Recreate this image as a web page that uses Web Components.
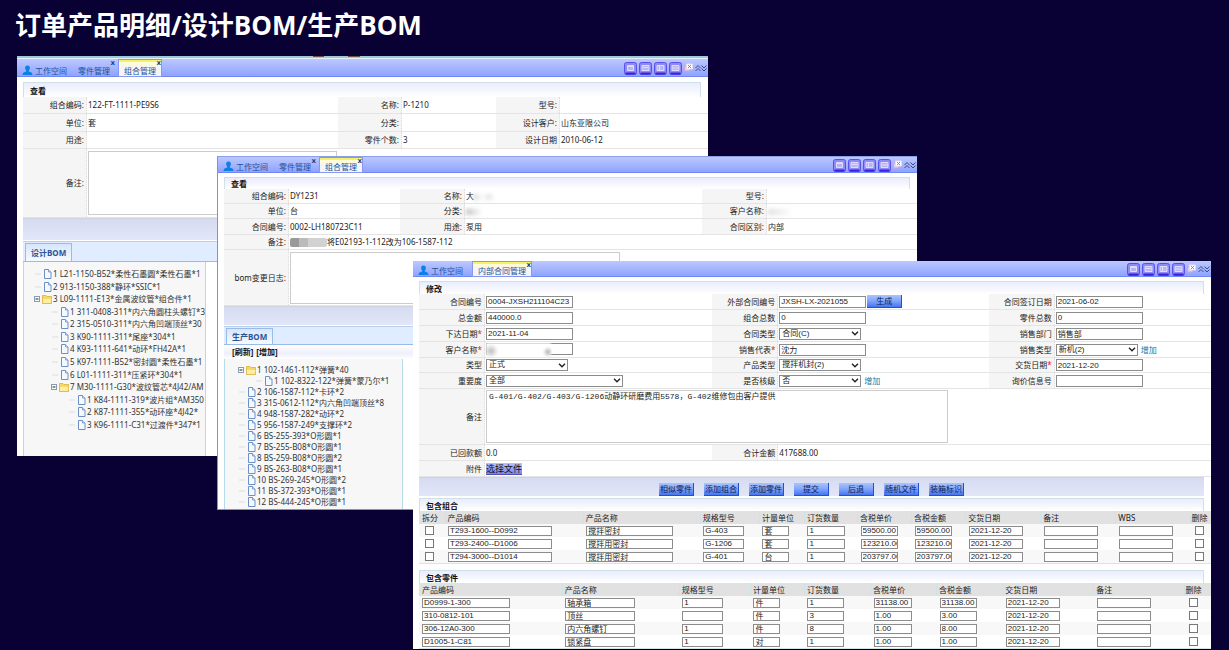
<!DOCTYPE html>
<html lang="zh-CN">
<head>
<meta charset="utf-8">
<title>订单产品明细/设计BOM/生产BOM</title>
<style>
  body { margin: 0; background: #090033; font: 8px/12px "Noto Sans", "Noto Sans CJK SC", sans-serif; color: #222; }
</style>
</head>
<body>
<bom-desktop></bom-desktop>

<template id="t-desktop">
  <style>
    :host { display: block; position: relative; min-height: 100vh; overflow: hidden; }
    h1 { margin: 0; padding: 5px 15px; font: bold 26px/40px "Open Sans", "Noto Sans CJK SC", sans-serif; color: #fff; }
    app-window { position: absolute; }
    .w1 { left: 17px; right: 521px; top: 56px; --row: 17px; --cols: 315fr 158fr 212fr; --label: 64px; --head: 15px; --bar: 18px; --top: 5px; }
    .w2 { left: 217px; right: 312px; top: 156px; --row: 15px; --cols: 176fr 302fr 215fr; --label: 65px; --head: 12px; --bar: 16px; border: 1px solid #6f9ad6; border-right: 0; border-top-color: #8d9fe8; }
    .w3 { left: 413px; right: 18px; top: 261px; --row: 16px; --cols: 293fr 276fr 222fr; --label: 66px; --head: 13px; --bar: 16px; border-bottom: 1px solid #000; }
    .strip { height: 3px; background: linear-gradient(90deg, transparent 296px, #6b5145 296px 307px, transparent 307px 331px, #6b5145 331px 343px, transparent 343px) 0 0 / 100% 1px no-repeat, linear-gradient(#9fc8dc 2px, #e4f2f8 2px); }
    .band { height: 19px; margin-right: 7px; border-top: 1px solid #cfd3de; background: linear-gradient(#d6dbf1, #e2e6f8); box-sizing: border-box; }
    .w1 .band, .w2 .band { margin-right: 0; }
    .w1 .band { height: 22px; }
    .w3 .band { display: flex; justify-content: center; align-items: flex-end; gap: 10px; }
    .pixel { display: inline-flex; vertical-align: middle; height: 9px; width: 37px; background: linear-gradient(90deg, #999 9px, #bbb 9px 18px, #d2d2d2 18px); border-radius: 2px; }
    .smudge { display: inline-block; vertical-align: middle; width: 18px; height: 6px; filter: blur(2px); background: linear-gradient(90deg, #ccc, #fff 40%, #ddd); }
    .long { width: 120px; background: linear-gradient(90deg, #ddd, #fff 20%); }
    .cloud { width: 80px; background: linear-gradient(90deg, #bbb, #fff 20%); }
    .gap { height: 6px; }
  </style>
  <h1>订单产品明细/设计BOM/生产BOM</h1>

  <app-window class="w1" tabs="零件管理,组合管理">
    <div class="strip" slot="top"></div>
    <panel-head>查看</panel-head>
    <form-row>
      <form-field label="组合编码:">122-FT-1111-PE9S6</form-field>
      <form-field label="名称:">P-1210</form-field>
      <form-field label="型号:"></form-field>
    </form-row>
    <form-row style="--row:18px">
      <form-field label="单位:">套</form-field>
      <form-field label="分类:"></form-field>
      <form-field label="设计客户:">山东亚限公司</form-field>
    </form-row>
    <form-row>
      <form-field label="用途:"></form-field>
      <form-field label="零件个数:">3</form-field>
      <form-field label="设计日期">2010-06-12</form-field>
    </form-row>
    <form-row style="--cols:1fr;--row:69px"><form-field label="备注:" kind="textarea" size="249" lines="64"></form-field></form-row>
    <div class="band"></div>
    <bom-tree tab="设计BOM" style="--tree:163px;--pad:6px;--end:25px;--strip:21px;--pane:183px;--ind:8px"
      items="0|L|1 L21-1150-B52*柔性石墨圆*柔性石墨*1;0|L|2 913-1150-388*静环*SSIC*1;0|F|3 L09-1111-E13*金属波纹管*组合件*1;1|L|1 311-0408-311*内六角圆柱头螺钉*3;1|L|2 315-0510-311*内六角凹端顶丝*30;1|L|3 K90-1111-311*尾座*304*1;1|L|4 K93-1111-641*动环*FH42A*1;1|L|5 K97-1111-B52*密封圆*柔性石墨*1;1|L|6 L01-1111-311*压紧环*304*1;1|F|7 M30-1111-G30*波纹管芯*4J42/AM;2|L|1 K84-1111-319*波片组*AM350;2|L|2 K87-1111-355*动环座*4J42*;2|L|3 K96-1111-C31*过渡件*347*1"></bom-tree>
  </app-window>

  <app-window class="w2" tabs="零件管理,组合管理">
    <panel-head>查看</panel-head>
    <form-row>
      <form-field label="组合编码:">DY1231</form-field>
      <form-field label="名称:">大<span class="smudge"></span></form-field>
      <form-field label="型号:"></form-field>
    </form-row>
    <form-row>
      <form-field label="单位:">台</form-field>
      <form-field label="分类:"><span class="smudge cloud"></span></form-field>
      <form-field label="客户名称:"><span class="smudge long"></span></form-field>
    </form-row>
    <form-row style="--row:16px">
      <form-field label="合同编号:">0002-LH180723C11</form-field>
      <form-field label="用途:">泵用</form-field>
      <form-field label="合同区别:">内部</form-field>
    </form-row>
    <form-row style="--cols:1fr"><form-field label="备注:"><span class="pixel"></span>将E02193-1-112改为106-1587-112</form-field></form-row>
    <form-row style="--cols:1fr;--row:56px"><form-field label="bom变更日志:" kind="textarea" size="330" lines="52"></form-field></form-row>
    <div class="band"></div>
    <bom-tree tab="生产BOM" tools style="--tree:143px;--pad:5px;--end:2px;--strip:19px;--pane:179px;--ind:11px"
      items="0|F|1 102-1461-112*弹簧*40;1|L|1 102-8322-122*弹簧*蒙乃尔*1;0|L|2 106-1587-112*卡环*2;0|L|3 315-0612-112*内六角凹端顶丝*8;0|L|4 948-1587-282*动环*2;0|L|5 956-1587-249*支撑环*2;0|L|6 BS-255-393*O形圆*1;0|L|7 BS-255-B08*O形圆*1;0|L|8 BS-259-B08*O形圆*2;0|L|9 BS-263-B08*O形圆*1;0|L|10 BS-269-245*O形圆*2;0|L|11 BS-372-393*O形圆*1;0|L|12 BS-444-245*O形圆*1"></bom-tree>
  </app-window>

  <app-window class="w3" tabs="内部合同管理">
    <panel-head>修改</panel-head>
    <form-row>
      <form-field label="合同编号" kind="input" value="0004-JXSH211104C23"></form-field>
      <form-field label="外部合同编号" kind="input" value="JXSH-LX-2021055"><blue-button slot="after">生成</blue-button></form-field>
      <form-field label="合同签订日期" kind="input" value="2021-06-02"></form-field>
    </form-row>
    <form-row>
      <form-field label="总金额" kind="input" value="440000.0"></form-field>
      <form-field label="组合总数" kind="input" value="0"></form-field>
      <form-field label="零件总数" kind="input" value="0"></form-field>
    </form-row>
    <form-row>
      <form-field label="下达日期" required kind="input" value="2021-11-04"></form-field>
      <form-field label="合同类型" kind="select" value="合同(C)"></form-field>
      <form-field label="销售部门" kind="input" value="销售部"></form-field>
    </form-row>
    <form-row>
      <form-field label="客户名称" required kind="input" masked value=""></form-field>
      <form-field label="销售代表" required kind="input" value="沈力"></form-field>
      <form-field label="销售类型" kind="select" value="新机(2)" link="增加"></form-field>
    </form-row>
    <form-row style="--row:15px">
      <form-field label="类型" kind="select" value="正式"></form-field>
      <form-field label="产品类型" kind="select" value="搅拌机封(2)"></form-field>
      <form-field label="交货日期" required kind="input" value="2021-12-20"></form-field>
    </form-row>
    <form-row>
      <form-field label="重要度" kind="select" size="137" value="全部"></form-field>
      <form-field label="是否核级" kind="select" value="否" link="增加"></form-field>
      <form-field label="询价信息号" kind="input" value=""></form-field>
    </form-row>
    <form-row style="--cols:1fr;--row:56px"><form-field label="备注" kind="textarea" size="462" lines="53" value="G-401/G-402/G-403/G-1206动静环研磨费用5578，G-402维修包由客户提供"></form-field></form-row>
    <form-row style="--cols:293fr 498fr">
      <form-field label="已回款额">0.0</form-field>
      <form-field label="合计金额">417688.00</form-field>
    </form-row>
    <form-row style="--cols:1fr"><form-field label="附件" kind="file" value="选择文件"></form-field></form-row>
    <div class="band">
      <blue-button>相似零件</blue-button><blue-button>添加组合</blue-button><blue-button>添加零件</blue-button><blue-button>提交</blue-button><blue-button>后退</blue-button><blue-button>随机文件</blue-button><blue-button>装箱标识</blue-button>
    </div>
    <panel-head style="margin-top:2px">包含组合</panel-head>
    <line-table
      cols="拆分:26:0,产品编码:138:104,产品名称:117:87,规格型号:59:41,计量单位:45:27,订货数量:53:38,含税单价:54:37,含税金额:54:37,交货日期:75:54,备注:75:54,WBS:75:54,删除:20:0"
      rows="|T293-1600--D0992|搅拌密封|G-403|套|1|59500.00|59500.00|2021-12-20||| ;|T293-2400--D1006|搅拌用密封|G-1206|套|1|123210.00|123210.00|2021-12-20||| ;|T294-3000--D1014|搅拌用密封|G-401|台|1|203797.00|203797.00|2021-12-20||| "></line-table>
    <div class="gap"></div>
    <panel-head>包含零件</panel-head>
    <line-table
      cols="产品编码:143:88,产品名称:117:70,规格型号:71:41,计量单位:54:27,订货数量:66:37,含税单价:66:38,含税金额:66:37,交货日期:91:54,备注:91:54,删除:26:0"
      rows="D0999-1-300|轴承箱|1|件|1|31138.00|31138.00|2021-12-20|| ;310-0812-101|顶丝||件|3|1.00|3.00|2021-12-20|| ;306-12A0-300|内六角螺钉|1|件|8|1.00|8.00|2021-12-20|| ;D1005-1-C81|锁紧盘|1|对|1|1.00|1.00|2021-12-20|| "></line-table>
  </app-window>
</template>

<template id="t-window">
  <style>
    :host { display: block; background: #fff; overflow: hidden; }
    header { display: flex; align-items: stretch; height: var(--bar); box-sizing: border-box; background: linear-gradient(#bcc8ff, #8fa3ff); border-bottom: 1px solid #7187f5; padding: 1px 1px 0 0; }
    nav { display: flex; flex: 1; }
    button { font: inherit; color: #1c5296; background: none; border: 0; padding: 0; }
    .home { display: flex; align-items: flex-end; padding: 0 0 0 5px; width: 56px; box-sizing: border-box; line-height: 11px; gap: 2px; }
    .home svg { width: 11px; height: 11px; }
    .tab { position: relative; display: flex; align-items: flex-end; padding: 0 5px; line-height: 11px; white-space: nowrap; }
    .tab i { position: absolute; right: 0; top: 0; font: bold 7px/7px "DejaVu Sans", sans-serif; color: #173f8a; }
    .tab.on { background: linear-gradient(#fdfbd8 20%, #f3f5fb 30%); border-top: 2px solid #f5f26a; outline: 1px solid #8798f2; margin-left: 4px; }
    .on i { top: -2px; }
    .tools { display: flex; align-items: center; gap: 2px; }
    .tools button { display: flex; }
    .body { padding: var(--top, 4px) 0 0 6px; }
  </style>
  <slot name="top"></slot>
  <header>
    <nav>
      <button class="home" type="button"><svg viewBox="0 0 11 11"><path d="M5.5 0.5c1.8 0 2.5 1.300 2.300 3-.1 1-.6 1.800-1 2.200v.8c2 .5 3.700 1.200 3.700 3.500H.5c0-2.300 1.700-3 3.700-3.500v-.8c-.4-.4-.9-1.200-1-2.200-.2-1.700.5-3 2.300-3z" fill="#0d80e8"/></svg>工作空间</button>
    </nav>
    <div class="tools"></div>
  </header>
  <div class="body"><slot></slot></div>
</template>

<template id="t-head">
  <style>
    :host { display: block; box-sizing: border-box; height: var(--head); margin-right: 7px; padding-left: 6px; font-weight: bold; line-height: var(--head); color: #111; border: 1px solid #cfe0ea; border-width: 1px 1px 0 1px; background: linear-gradient(#e9edfd, #fff); }
  </style>
  <slot></slot>
</template>

<template id="t-row">
  <style>
    :host { display: grid; grid-template-columns: var(--cols); height: var(--row); box-sizing: border-box; border-bottom: 1px solid #e4e4e4; }
  </style>
  <slot></slot>
</template>

<template id="t-field">
  <style>
    :host { display: grid; grid-template-columns: var(--label) minmax(0, 1fr); min-width: 0; min-height: 0; }
    label { display: flex; align-items: center; justify-content: flex-end; padding-right: 2px; background: #f5f5f5; border-right: 1px dotted #ddd; box-sizing: border-box; white-space: nowrap; }
    em { color: #e02020; font-style: normal; }
    .v { display: flex; align-items: center; padding-left: 1px; gap: 1px; white-space: nowrap; min-width: 0; }
    input, select, textarea { font: 8px/10px "Liberation Sans", "Noto Sans CJK SC", sans-serif; color: #222; box-sizing: border-box; border: 1px solid #8c8c8c; border-radius: 0; background: #fff; margin: 0; padding: 0 1px; height: 12px; width: 87px; }
    textarea { font-family: "Liberation Mono", "Noto Sans CJK SC", monospace; resize: none; border-color: #ccc; padding: 1px 2px; overflow: hidden; }
    .sel { display: grid; }
    .sel > * { grid-area: 1 / 1; }
    select { appearance: none; width: 82px; padding-left: 2px; }
    svg { width: 8px; height: 5px; place-self: center end; margin-right: 2px; pointer-events: none; }
    a { color: #1878a8; text-decoration: none; margin-left: 2px; }
    .mask { display: grid; }
    .mask > * { grid-area: 1 / 1; }
    .mask span { width: 65px; height: 14px; align-self: center; background: radial-gradient(circle at 5px 8px, #bbb, transparent 7px), radial-gradient(circle at 62px 9px, #aaa, transparent 5px), #fff; filter: blur(1px); }
    .file { font: 9px/11px "Noto Sans", "Noto Sans CJK SC", sans-serif; padding: 0; height: 12px; color: #111; border: 0; border-bottom: 1px solid #4a50b8; background: linear-gradient(#b6c2ff, #7c84ea); }
  </style>
  <label for="c"></label>
  <div class="v"></div>
</template>

<template id="t-button">
  <style>
    :host { display: block; }
    button { display: block; width: 35px; height: 13px; padding: 0; border: 0; border-right: 1px solid #2450d0; border-bottom: 1px solid #2450d0; font: inherit; line-height: 12px; color: #0b1c55; white-space: nowrap; background: linear-gradient(#a9c4fb, #86a8fb 45%, #4575f4); }
  </style>
  <button type="button"><slot></slot></button>
</template>

<template id="t-tree">
  <style>
    :host { display: block; padding-top: 1px; }
    .strip { height: var(--strip); box-sizing: border-box; background: #e0ecff; border-bottom: 1px solid #99bbe8; border-top: 1px solid #b8d0ee; padding: 1px 0 0 2px; display: flex; }
    .strip button { font: bold 8px/14px "Noto Sans", "Noto Sans CJK SC", sans-serif; color: #2a5699; padding: 0 5px; border: 1px solid #99bbe8; border-bottom: 0; background: linear-gradient(#d7e6fd, #f6faff); white-space: nowrap; }
    .tools { padding-left: 8px; line-height: 14px; font-weight: bold; background: linear-gradient(#fff, #eef0fc 60%, #fff); }
    .tools a { color: #111; text-decoration: none; margin-right: 3px; }
    .pane { padding: var(--pad) 0 var(--end) var(--ind); width: var(--pane); box-sizing: border-box; background: #f7f7f7; border: 1px solid #b5dbe8; border-width: 0 1px; overflow: hidden; }
    ul { list-style: none; display: flex; flex-direction: column; height: var(--tree); padding: 0; margin: 0; }
    li { flex: 1; display: flex; align-items: center; min-height: 0; white-space: nowrap; margin-left: calc(var(--lv) * 17px); color: #333; }
    svg { flex: none; width: 20px; height: 12px; margin-right: 1px; }
  </style>
  <div class="strip"><button type="button"></button></div>
  <div class="tools" hidden><a href="#r">[刷新]</a><a href="#a">[增加]</a></div>
  <div class="pane"><ul></ul></div>
</template>

<template id="t-table">
  <style>
    :host { display: block; border-bottom: 1px solid #d5e5ea; }
    table { width: 100%; table-layout: fixed; border-collapse: collapse; }
    th { font-weight: normal; text-align: left; height: 13px; line-height: 12px; padding: 0 0 0 2px; background: #e1e1e1; white-space: nowrap; border-left: 1px solid #cfe2e6; box-sizing: border-box; }
    th:first-child { border-left: 0; padding-left: 3px; }
    th:last-child { padding-left: 0; }
    td { height: 13px; padding: 0 0 0 3px; line-height: 0; }
    tr:nth-child(odd) td { background: #f8f8f8; }
    input { display: block; font: 8px/9px "Liberation Sans", "Noto Sans CJK SC", sans-serif; color: #222; box-sizing: border-box; height: 10px; border: 1px solid #8c8c8c; border-radius: 0; padding: 0 0 0 1px; margin: 0; background: #fff; }
    [type=checkbox] { appearance: none; width: 9px; height: 9px; margin-left: 3px; border-color: #777; }
    td:last-child [type=checkbox] { margin-left: 1px; }
  </style>
  <table><colgroup></colgroup><thead><tr></tr></thead><tbody></tbody></table>
</template>

<script>
  class Base extends HTMLElement {
    use(id) {
      this.attachShadow({ mode: 'open' }).append(document.getElementById(id).content.cloneNode(true));
      return this.shadowRoot;
    }
    $(s) { return this.shadowRoot.querySelector(s); }
  }

  customElements.define('panel-head', class extends Base { connectedCallback() { this.use('t-head'); } });
  customElements.define('form-row', class extends Base { connectedCallback() { this.use('t-row'); } });
  customElements.define('blue-button', class extends Base { connectedCallback() { this.use('t-button'); } });

  const toolShapes = [
    'M3.500 3.500h6v5h-6zM3 4.500h7',
    'M3 3.500h7v5H3zM4 5.500h5',
    'M3 3.500h7v5H3zM5.500 4v4',
    'M3 3.500h7v5H3zM3 6h7'
  ];

  customElements.define('app-window', class extends Base {
    connectedCallback() {
      this.use('t-window');
      const names = this.getAttribute('tabs').split(',');
      names.forEach((n, i) => {
        const b = document.createElement('button');
        b.type = 'button';
        b.className = 'tab' + (i === names.length - 1 ? ' on' : '');
        b.innerHTML = `${n}<i>x</i>`;
        this.$('nav').append(b);
      });
      this.$('.tools').innerHTML = toolShapes.map((d, i) =>
        `<button type="button" aria-label="布局${i + 1}"><svg width="13" height="13" viewBox="0 0 13 13"><rect x=".5" y=".5" width="12" height="12" rx="2" fill="#8f8af4" stroke="#5a50ee"/><path d="M1.500 11.500h10" stroke="#3a22e0" stroke-width="2"/><path d="${d}" fill="#b7b4f6" stroke="#dedcfb"/></svg></button>`).join('') +
        `<button type="button" aria-label="关闭"><svg width="9" height="12" viewBox="0 0 9 12"><path d="M.5 4h5v5h-5z" fill="#e8c8e8" stroke="#c9a6dc"/><path d="M2.500 2h6v5h-6z" fill="#fff" stroke="#e8dce8"/><path d="M4 3l3 3M7 3L4 6" stroke="#777" stroke-width=".8"/></svg></button>` +
        `<button type="button" aria-label="展开"><svg width="12" height="9" viewBox="0 0 12 9" fill="none" stroke="#34406e" stroke-width=".9"><path d="M.5 4L3 1.500 5.500 4M.5 7L3 4.500 5.500 7M6.500 1.500L9 4l2.500-2.500M6.500 4.500L9 7l2.500-2.500"/></svg></button>`;
    }
  });

  customElements.define('form-field', class extends Base {
    connectedCallback() {
      this.use('t-field');
      const a = n => this.getAttribute(n) || '';
      const label = this.$('label'), v = this.$('.v'), kind = a('kind');
      label.textContent = a('label');
      if (this.hasAttribute('required')) label.insertAdjacentHTML('beforeend', '<em>*</em>');
      const size = a('size') ? `width:${a('size')}px;` : '';
      if (kind === 'input') {
        const box = `<input id="c" value="${a('value')}">`;
        v.innerHTML = this.hasAttribute('masked') ? `<div class="mask">${box}<span></span></div>` : box;
      } else if (kind === 'select') {
        v.innerHTML = `<div class="sel"><select id="c" style="${size}"><option>${a('value')}</option></select><svg viewBox="0 0 8 5"><path d="M1 .8l3 3 3-3" fill="none" stroke="#222" stroke-width="1.400"/></svg></div>`;
      } else if (kind === 'textarea') {
        v.innerHTML = `<textarea id="c" style="${size}height:${a('lines')}px">${a('value')}</textarea>`;
      } else if (kind === 'file') {
        v.innerHTML = `<button id="c" class="file" type="button">${a('value')}</button>`;
      } else {
        label.removeAttribute('for');
        v.innerHTML = '<span><slot></slot></span>';
      }
      if (a('link')) v.insertAdjacentHTML('beforeend', `<a href="#add">${a('link')}</a>`);
      v.insertAdjacentHTML('beforeend', '<slot name="after"></slot>');
    }
  });

  const leaf = '<path d="M3 6h6" stroke="#ddd"/><path d="M12.500 1.500h4l2.500 2.500v6.500h-6.500z" fill="#f4f9ff" stroke="#6d8fc8"/><path d="M16.500 1.500V4H19" fill="#cfe0fa" stroke="#6d8fc8" stroke-width=".8"/>';
  const folder = '<rect x="2.500" y="3.500" width="5" height="5" fill="#fff" stroke="#8a9ab0"/><path d="M3.500 6h3" stroke="#222"/><path d="M10.500 2.500h3.500l1 1h4.500v7h-9z" fill="#f6d868" stroke="#dcae3c" stroke-width=".8"/><path d="M11 6h8.500l-.8 4H11z" fill="#fdeea0"/>';

  customElements.define('bom-tree', class extends Base {
    connectedCallback() {
      this.use('t-tree');
      this.$('.strip button').textContent = this.getAttribute('tab');
      this.$('.tools').hidden = !this.hasAttribute('tools');
      this.$('ul').innerHTML = this.getAttribute('items').split(';').map(t => {
        const [lv, kind, text] = t.split('|');
        return `<li style="--lv:${lv}"><svg viewBox="0 0 20 12">${kind === 'F' ? folder : leaf}</svg>${text}</li>`;
      }).join('');
    }
  });

  customElements.define('line-table', class extends Base {
    connectedCallback() {
      this.use('t-table');
      const cols = this.getAttribute('cols').split(',').map(c => c.split(':'));
      this.$('colgroup').innerHTML = cols.map(c => `<col style="width:${c[1]}px">`).join('');
      this.$('thead tr').innerHTML = cols.map(c => `<th>${c[0]}</th>`).join('');
      this.$('tbody').innerHTML = this.getAttribute('rows').split(';').map(r => '<tr>' + r.split('|').map((v, i) => {
        const [name, , w] = cols[i];
        return w === '0'
          ? `<td><input type="checkbox" aria-label="${name}"></td>`
          : `<td><input aria-label="${name}" style="width:${w}px" value="${v}"></td>`;
      }).join('') + '</tr>').join('');
    }
  });

  customElements.define('bom-desktop', class extends Base { connectedCallback() { this.use('t-desktop'); } });
</script>
</body>
</html>
